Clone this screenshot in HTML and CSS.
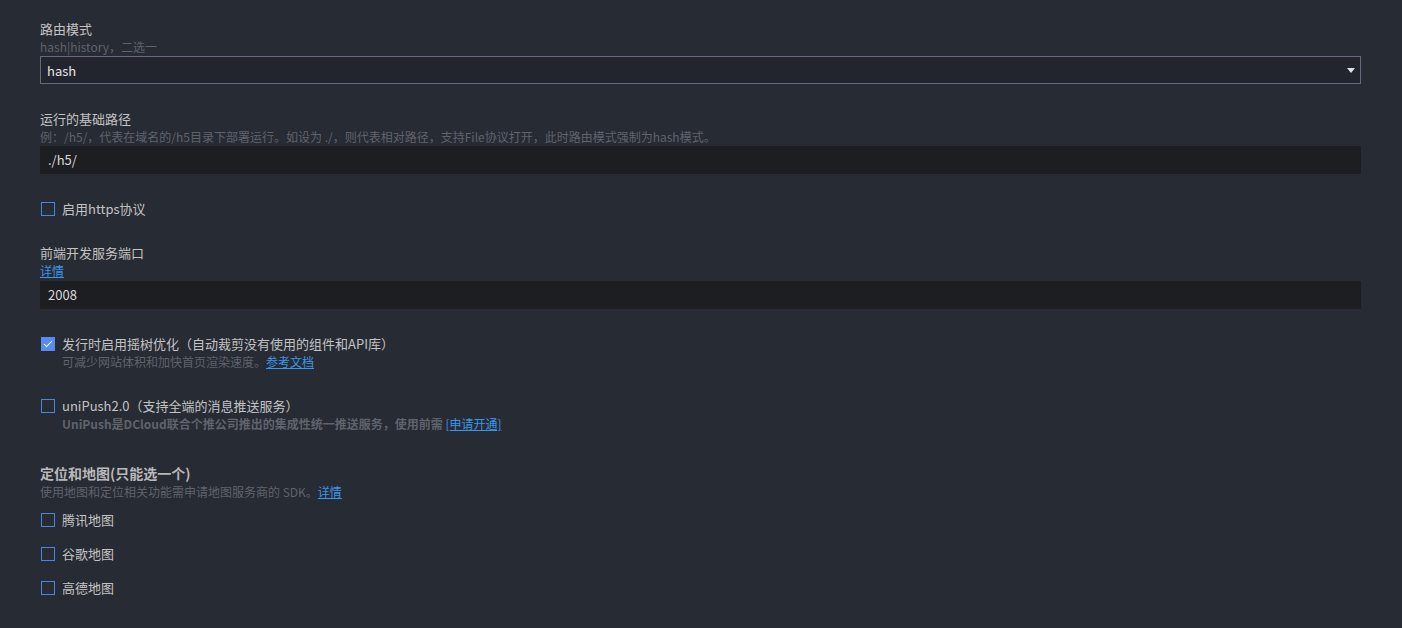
FILE: index.html
```html
<!DOCTYPE html>
<html lang="zh-CN">
<head>
    <meta charset="UTF-8">
    <meta name="viewport" content="width=device-width, initial-scale=1.0">
    <title>H5配置</title>
    <link rel="stylesheet" href="styles.css">
</head>
<body>
    <main class="config">
        <div class="field">
            <div class="label">路由模式</div>
            <div class="desc">hash|history，二选一</div>
            <div class="select">
                <span>hash</span>
                <span class="arrow"></span>
            </div>
        </div>

        <div class="field">
            <div class="label">运行的基础路径</div>
            <div class="desc">例：/h5/，代表在域名的/h5目录下部署运行。如设为 ./，则代表相对路径，支持File协议打开，此时路由模式强制为hash模式。</div>
            <div class="input">./h5/</div>
        </div>

        <div class="field">
            <div class="check"><span class="box"></span>启用https协议</div>
        </div>

        <div class="field">
            <div class="label">前端开发服务端口</div>
            <a class="link" href="#">详情</a>
            <div class="input">2008</div>
        </div>

        <div class="field">
            <div class="check"><span class="box checked"></span>发行时启用摇树优化（自动裁剪没有使用的组件和API库）</div>
            <div class="desc indent">可减少网站体积和加快首页渲染速度。<a class="link" href="#">参考文档</a></div>
        </div>

        <div class="field">
            <div class="check"><span class="box"></span>uniPush2.0（支持全端的消息推送服务）</div>
            <div class="desc indent bold">UniPush是DCloud联合个推公司推出的集成性统一推送服务，使用前需 <a class="link normal" href="#">[申请开通]</a></div>
        </div>

        <div class="field section">
            <div class="title">定位和地图(只能选一个)</div>
            <div class="desc">使用地图和定位相关功能需申请地图服务商的 SDK。<a class="link" href="#">详情</a></div>
            <div class="options">
                <div class="check"><span class="box"></span>腾讯地图</div>
                <div class="check"><span class="box"></span>谷歌地图</div>
                <div class="check"><span class="box"></span>高德地图</div>
            </div>
        </div>
    </main>
</body>
</html>
```

FILE: styles.css
```css
body {
    margin: 0;
    padding: 0;
    background-color: #272b34;
    color: #c3c3c3;
    font-family: "Microsoft YaHei", "Noto Sans CJK SC", "Noto Sans", sans-serif;
    font-size: 13px;
    overflow: hidden;
}
.config {
    padding: 20px 41px 0 40px;
    display: flex;
    flex-direction: column;
    gap: 26px;
}
.field {
    display: flex;
    flex-direction: column;
}
.label {
    line-height: 18px;
    height: 18px;
}
.desc {
    font-size: 12px;
    line-height: 17px;
    height: 17px;
    color: #5f636c;
    white-space: nowrap;
}
.desc.indent {
    padding-left: 22px;
    line-height: 18px;
    height: 18px;
}
.desc.bold {
    font-weight: bold;
}
.link {
    color: #3a96ea;
    font-size: 12px;
    line-height: 18px;
    text-decoration: underline;
    align-self: flex-start;
}
.link.normal {
    font-weight: normal;
}
.select {
    height: 28px;
    box-sizing: border-box;
    border: 1px solid #656a80;
    background-color: #22252d;
    color: #e6e6e6;
    display: flex;
    align-items: center;
    justify-content: space-between;
    padding: 0 5px 0 6px;
    margin-top: 1px;
}
.arrow {
    width: 0;
    height: 0;
    border-left: 4px solid transparent;
    border-right: 4px solid transparent;
    border-top: 5px solid #e0e0e0;
}
.input {
    height: 28px;
    background-color: #1d1e22;
    color: #d8d8d8;
    line-height: 28px;
    padding-left: 8px;
    margin-top: 1px;
}
.check {
    display: flex;
    align-items: flex-start;
    gap: 7px;
    line-height: 18px;
    height: 18px;
    padding-left: 1px;
}
.box {
    width: 14px;
    height: 14px;
    margin-top: 2px;
    box-sizing: border-box;
    border: 1px solid #4a84e4;
    flex: none;
    position: relative;
}
.box.checked {
    background-color: #568cf1;
    border-color: #568cf1;
}
.box.checked::after {
    content: "";
    position: absolute;
    left: 4px;
    top: 1px;
    width: 3px;
    height: 7px;
    border-right: 1.5px solid #fff;
    border-bottom: 1.5px solid #fff;
    transform: rotate(45deg);
}
.section {
    margin-top: 4px;
}
.title {
    font-size: 14px;
    font-weight: bold;
    line-height: 20px;
    height: 20px;
    color: #b9b9b9;
}
.section .desc {
    line-height: 18px;
    height: 18px;
}
.options {
    display: flex;
    flex-direction: column;
    gap: 16px;
    margin-top: 10px;
}
```
